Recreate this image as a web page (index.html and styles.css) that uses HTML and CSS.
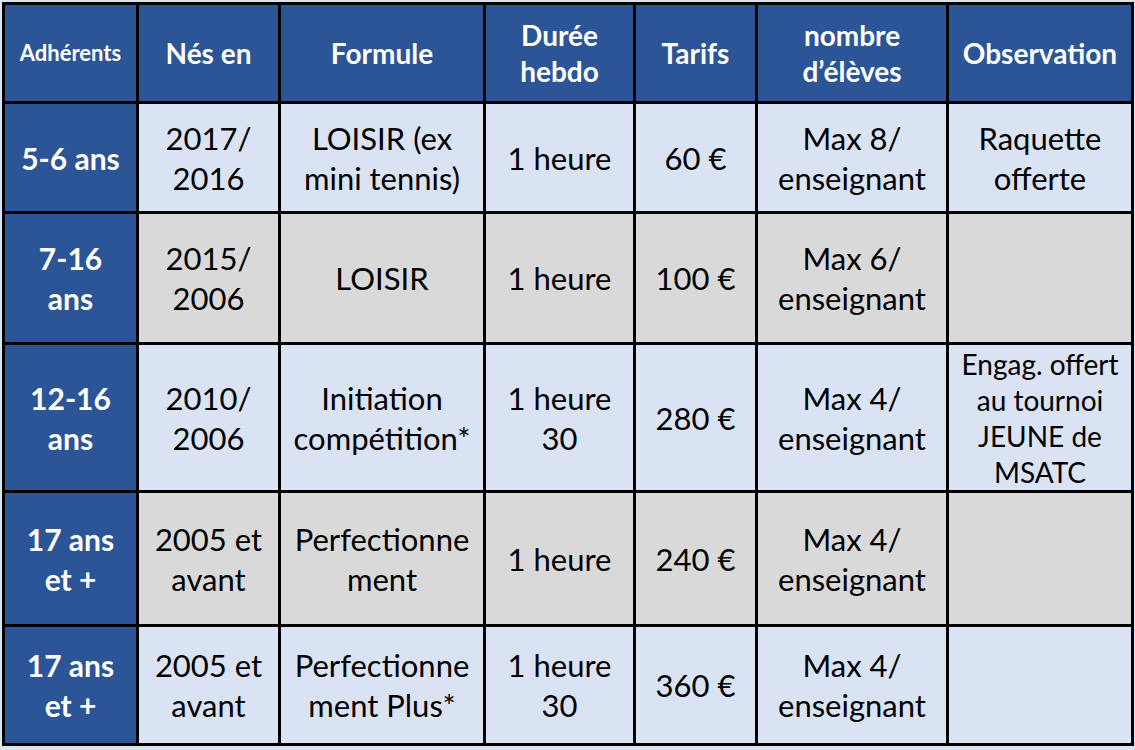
FILE: index.html
```html
<!DOCTYPE html>
<html lang="fr">
<head>
<meta charset="utf-8">
<title>Tarifs</title>
<link rel="stylesheet" href="styles.css">
</head>
<body>
<table class="tarifs">
  <colgroup>
    <col class="c1"><col class="c2"><col class="c3"><col class="c4"><col class="c5"><col class="c6"><col class="c7">
  </colgroup>
  <tr class="head">
    <th class="small">Adhérents</th>
    <th>Nés en</th>
    <th>Formule</th>
    <th>Durée<br>hebdo</th>
    <th>Tarifs</th>
    <th>nombre<br>d’élèves</th>
    <th>Observation</th>
  </tr>
  <tr class="r1 blue">
    <th>5-6 ans</th>
    <td>2017/<br>2016</td>
    <td>LOISIR (ex<br>mini tennis)</td>
    <td>1 heure</td>
    <td>60 €</td>
    <td>Max 8/<br>enseignant</td>
    <td>Raquette<br>offerte</td>
  </tr>
  <tr class="r2 grey">
    <th>7-16<br>ans</th>
    <td>2015/<br>2006</td>
    <td>LOISIR</td>
    <td>1 heure</td>
    <td>100 €</td>
    <td>Max 6/<br>enseignant</td>
    <td></td>
  </tr>
  <tr class="r3 blue">
    <th>12-16<br>ans</th>
    <td>2010/<br>2006</td>
    <td>Initiation<br>compétition*</td>
    <td>1 heure<br>30</td>
    <td>280 €</td>
    <td>Max 4/<br>enseignant</td>
    <td class="obs">Engag. offert<br>au tournoi<br>JEUNE de<br>MSATC</td>
  </tr>
  <tr class="r4 grey">
    <th>17 ans<br>et +</th>
    <td>2005 et<br>avant</td>
    <td>Perfectionne<br>ment</td>
    <td>1 heure</td>
    <td>240 €</td>
    <td>Max 4/<br>enseignant</td>
    <td></td>
  </tr>
  <tr class="r5 blue">
    <th>17 ans<br>et +</th>
    <td>2005 et<br>avant</td>
    <td>Perfectionne<br>ment Plus*</td>
    <td>1 heure<br>30</td>
    <td>360 €</td>
    <td>Max 4/<br>enseignant</td>
    <td></td>
  </tr>
</table>
</body>
</html>
```

FILE: styles.css
```css
html, body {
  margin: 0;
  padding: 0;
  background: #dae3f3;
}
body {
  padding: 2px 0 0 2px;
  font-family: Lato, "Liberation Sans", sans-serif;
}
.tarifs {
  border-collapse: collapse;
  table-layout: fixed;
  width: 1129px;
  border: 3px solid #000;
}
.c1 { width: 134px; }
.c2 { width: 142px; }
.c3 { width: 205px; }
.c4 { width: 150px; }
.c5 { width: 122px; }
.c6 { width: 191px; }
.c7 { width: 185px; }
.tarifs th, .tarifs td {
  border: 3px solid #000;
  padding: 0;
  text-align: center;
  vertical-align: middle;
  font-size: 31px;
  line-height: 40px;
  overflow: hidden;
  white-space: nowrap;
}
.tarifs td {
  color: #000;
  font-weight: 400;
}
.tarifs th {
  background: #2b5597;
  color: #fff;
  font-weight: 700;
  font-size: 30px;
}
.tarifs .head th {
  font-size: 28px;
  line-height: 36px;
}
.tarifs .head th.small {
  font-size: 22px;
}
.blue td { background: #dae3f3; }
.grey td { background: #d9d9d9; }
.head { height: 99px; }
.r1 { height: 110px; }
.r2 { height: 131px; }
.r3 { height: 148px; }
.r4 { height: 134px; }
.r5 { height: 119px; }
.tarifs td.obs {
  font-size: 28px;
  line-height: 36px;
}
```
